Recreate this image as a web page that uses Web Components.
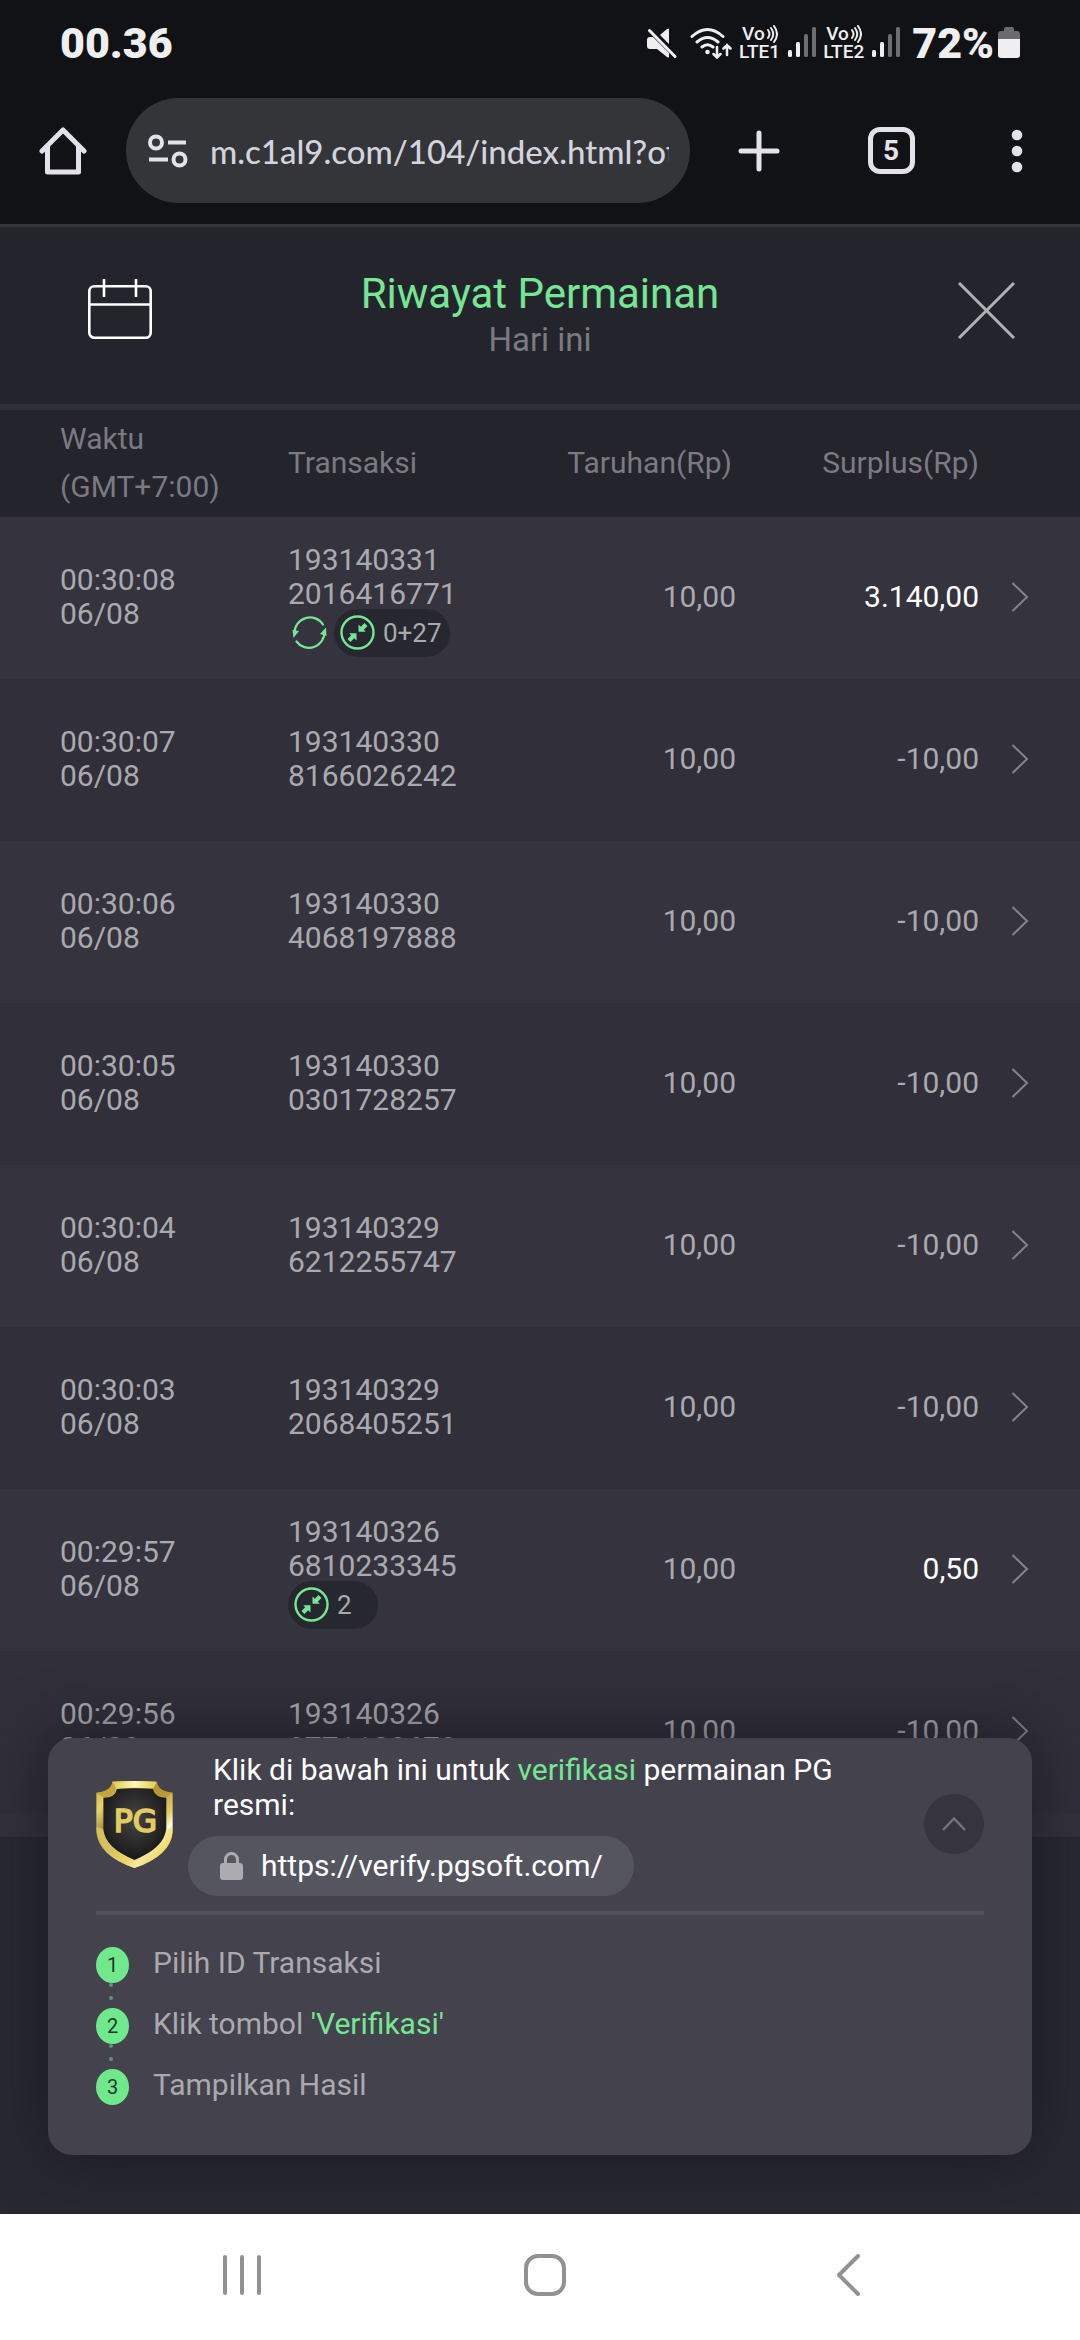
<!DOCTYPE html>
<html lang="id">
<head>
<meta charset="utf-8">
<meta name="viewport" content="width=device-width, initial-scale=1">
<title>Riwayat Permainan</title>
<style>
  html, body { margin: 0; }
  body {
    --bg: #282831;
    --bar: #24242d;
    --row: #302f3a;
    --row-alt: #35343e;
    --panel: #43424d;
    --text: #aaaaae;
    --muted: #7b7a80;
    --green: #76e694;
    --chrome: #111216;
    --chrome-fg: #e3e1e9;
    min-height: 100vh;
    display: flex;
    flex-direction: column;
    background: var(--bg);
    color: var(--text);
    font-family: Roboto, "Noto Sans", sans-serif;
    font-size: 30px;
    line-height: 34px;
  }
  main { flex: 1; position: relative; overflow: hidden; }
</style>
</head>
<body>
<status-bar time="00.36" battery="72%"></status-bar>
<browser-toolbar url="m.c1al9.com/104/index.html?ot" tabs="5"></browser-toolbar>
<page-header>
  <span slot="title">Riwayat Permainan</span>
  <span slot="subtitle">Hari ini</span>
</page-header>
<main>
  <bet-history></bet-history>
  <verify-panel>
    <span slot="intro">Klik di bawah ini untuk <span style="color:var(--green)">verifikasi</span> permainan PG resmi:</span>
    <verify-step number="1">Pilih ID Transaksi</verify-step>
    <verify-step number="2">Klik tombol <span style="color:var(--green)">'Verifikasi'</span></verify-step>
    <verify-step number="3" last>Tampilkan Hasil</verify-step>
  </verify-panel>
</main>
<system-nav></system-nav>

<script>
const RESET = `
  :host, *, *::before, *::after { box-sizing: border-box; }
  button { appearance: none; border: 0; margin: 0; padding: 0; background: none; color: inherit; font: inherit;
    display: flex; align-items: center; justify-content: center; }
  svg { display: block; flex: none; }
`;

function define(name, render) {
  customElements.define(name, class extends HTMLElement {
    constructor() {
      super();
      this.attachShadow({ mode: 'open' });
    }
    connectedCallback() {
      this.shadowRoot.innerHTML = render(this);
    }
  });
}

define('network-signal', el => `
  <style>${RESET}
    :host { display: flex; align-items: center; gap: 8px; }
    .label { display: grid; font-size: 19px; line-height: 18px; font-weight: 500; }
    .vo { display: flex; align-items: center; padding-left: 3px; gap: 1px; }
  </style>
  <div class="label">
    <span class="vo">Vo<svg width="12" height="18" viewBox="0 0 12 18" fill="none" stroke="currentColor" stroke-width="2" stroke-linecap="round"><path d="M2 5q3 4 0 8M5 3q4.500 6 0 12M8 1q6 8 0 16"/></svg></span>
    <span>LTE${el.getAttribute('sim')}</span>
  </div>
  <svg width="28" height="31" viewBox="0 0 28 31" fill="currentColor">
    <rect x="0" y="23" width="4" height="7" rx="1.500"/><rect x="8" y="15" width="4" height="15" rx="1.500"/>
    <rect x="16" y="7" width="4" height="23" rx="1.500" opacity=".42"/><rect x="24" y="0" width="4" height="30" rx="1.500" opacity=".42"/>
  </svg>`);

define('status-bar', el => `
  <style>${RESET}
    :host { display: flex; align-items: center; justify-content: space-between; height: 85px; padding: 0 60px;
      background: var(--chrome); color: #efefef; }
    .strong { font-size: 43px; line-height: 48px; font-weight: 900; }
    .icons { display: flex; align-items: center; gap: 7px; }
    .sound { margin-right: 6px; }
    .level { display: flex; align-items: center; gap: 4px; padding-left: 5px; }
  </style>
  <time class="strong">${el.getAttribute('time')}</time>
  <div class="icons">
    <svg class="sound" width="30" height="30" viewBox="0 0 30 30" fill="currentColor">
      <path d="M22 1v15L13 7l7-6q2-1 2 0zM0 12q0-3 3-3h3l16 16v4q0 1-2 0l-10-8H3q-3 0-3-3z"/>
      <path d="M2.500 2.500L28 28.500" stroke="currentColor" stroke-width="3" stroke-linecap="round"/>
    </svg>
    <svg width="42" height="32" viewBox="0 0 42 32" fill="none" stroke="currentColor" stroke-width="3" stroke-linecap="round">
      <path d="M2 9.500q15.500-14 31 0M7 15q10.500-9 21 0M12 20q5.500-4.500 11 0"/>
      <circle cx="17.500" cy="25" r="2.300" fill="currentColor" stroke="none"/>
      <path d="M27 20v10M23.500 27l3.500 3.500L30.500 27M37 28V18M33.500 21.500L37 18l3.500 3.500" stroke-width="2.500"/>
    </svg>
    <network-signal sim="1"></network-signal>
    <network-signal sim="2"></network-signal>
    <span class="level"><span class="strong">${el.getAttribute('battery')}</span>
      <svg width="22" height="32" viewBox="0 0 22 32">
        <path d="M6 2q0-2 2-2h6q2 0 2 2v2h3q3 0 3 3v6H0V7q0-3 3-3h3z" fill="#6b6b6e"/>
        <path d="M0 12h22v16q0 3-3 3H3q-3 0-3-3z" fill="currentColor"/>
      </svg>
    </span>
  </div>`);

define('browser-toolbar', el => `
  <style>${RESET}
    :host { display: flex; align-items: center; padding: 13px 0 21px; background: var(--chrome); color: var(--chrome-fg); }
    .side { width: 126px; height: 105px; }
    .plus { width: 138px; height: 105px; }
    form { flex: 1; min-width: 0; height: 105px; display: flex; align-items: center; gap: 22px; padding: 0 21px 0 22px;
      border-radius: 53px; background: #343539; }
    input { appearance: none; flex: 1; min-width: 0; border: 0; padding: 0; margin: 0; outline: 0; background: none;
      height: 48px; color: #d3d3dd; font: 500 33px/48px Lato, "Noto Sans", sans-serif; }
    .tabs span { display: flex; align-items: center; justify-content: center; width: 47px; height: 47px;
      border: 5px solid currentColor; border-radius: 12px; font-size: 28px; line-height: 28px; font-weight: 700; }
  </style>
  <button class="side" aria-label="Beranda"><svg width="48" height="48" viewBox="0 0 48 48" fill="none" stroke="currentColor" stroke-width="5" stroke-linecap="round" stroke-linejoin="round"><path d="M3 24L24 3l21 21M8.500 20v25h31V20"/></svg></button>
  <form>
    <button type="button" aria-label="Info situs"><svg width="40" height="34" viewBox="0 0 40 34" fill="none" stroke="currentColor" stroke-width="4"><circle cx="8" cy="8.500" r="6"/><path d="M20 8.500h18M1 25.500h19"/><circle cx="31.500" cy="25.500" r="6"/></svg></button>
    <input type="text" aria-label="Alamat" value="${el.getAttribute('url')}">
  </form>
  <button class="plus" aria-label="Tab baru"><svg width="42" height="42" viewBox="0 0 42 42" stroke="currentColor" stroke-width="5" stroke-linecap="round"><path d="M21 3v36M3 21h36"/></svg></button>
  <button class="side tabs" aria-label="Tab"><span>${el.getAttribute('tabs')}</span></button>
  <button class="side" aria-label="Menu"><svg width="12" height="44" viewBox="0 0 12 44" fill="currentColor"><circle cx="6" cy="6" r="5.300"/><circle cx="6" cy="22" r="5.300"/><circle cx="6" cy="38" r="5.300"/></svg></button>`);

define('page-header', () => `
  <style>${RESET}
    :host { display: grid; grid-template-columns: 1fr auto 1fr; align-items: start; padding: 43px 65px 0 88px;
      height: 186px; background: var(--bar); border-top: 3px solid #343539; border-bottom: 6px solid #2f2e39; }
    .calendar { justify-self: start; margin-top: 9px; color: #fff; }
    .close { justify-self: end; margin-top: 12px; color: #b1b0b5; }
    header { text-align: center; padding-right: 24px; margin-left: 1px; }
    h1 { margin: 0; font-size: 42px; line-height: 48px; font-weight: 400; color: var(--green); }
    p { margin: 0; font-size: 33px; line-height: 44px; color: var(--muted); }
  </style>
  <button class="calendar" aria-label="Pilih tanggal"><svg width="64" height="60" viewBox="0 0 64 60" fill="none" stroke="currentColor" stroke-width="2.600"><rect x="1.300" y="7.300" width="61.400" height="51.400" rx="5"/><path d="M1.300 25.500h61.400M16 0v18M48 0v18"/></svg></button>
  <header><h1><slot name="title"></slot></h1><p><slot name="subtitle"></slot></p></header>
  <button class="close" aria-label="Tutup"><svg width="57" height="57" viewBox="0 0 57 57" stroke="currentColor" stroke-width="3"><path d="M1 1l55 55M56 1L1 56"/></svg></button>`);

define('free-spin-icon', () => `
  <style>${RESET} :host { display: block; color: var(--green); margin: 0 7px 0 4px; }</style>
  <svg width="35" height="35" viewBox="0 0 35 35" fill="none" stroke="currentColor" stroke-width="2.200" stroke-linecap="round">
    <path d="M2.500 18A15.500 15.500 0 0 1 31 9.500M4.500 26.500A15.500 15.500 0 0 0 32.500 17"/>
    <path d="M0.500 15l1 8 5.500-7zM34.500 21l-.5-8.500-6 6.500z" fill="currentColor" stroke="none"/>
  </svg>`);

define('cascade-badge', () => `
  <style>${RESET}
    :host { display: inline-flex; align-items: center; gap: 8px; min-width: 90px; height: 48px; padding: 0 8px 0 6px;
      border-radius: 24px; background: #272730; font-size: 26px; line-height: 34px; }
    svg { color: var(--green); }
  </style>
  <svg width="35" height="35" viewBox="0 0 35 35" fill="currentColor">
    <circle cx="17.500" cy="17.500" r="16" fill="none" stroke="currentColor" stroke-width="2.400"/>
    <path d="M18.500 9.500l2.300 2.200 3.700-3.700 3 3-3.700 3.700 2 2h-7.300zM16.500 25.500l-2.300-2.200-3.700 3.700-3-3 3.700-3.700-2-2h7.300z"/>
  </svg><slot></slot>`);

const BETS = [
  { time: '00:30:08', id: ['193140331', '2016416771'], win: '3.140,00', spins: true, cascade: '0+27' },
  { time: '00:30:07', id: ['193140330', '8166026242'] },
  { time: '00:30:06', id: ['193140330', '4068197888'] },
  { time: '00:30:05', id: ['193140330', '0301728257'] },
  { time: '00:30:04', id: ['193140329', '6212255747'] },
  { time: '00:30:03', id: ['193140329', '2068405251'] },
  { time: '00:29:57', id: ['193140326', '6810233345'], win: '0,50', cascade: '2' },
  { time: '00:29:56', id: ['193140326', '8771108678'] },
];

const betRow = b => `
  <tr>
    <td class="time">${b.time}<br>06/08</td>
    <td class="${b.cascade ? 'tx featured' : 'tx'}">${b.id.join('<br>')}${b.cascade ? `<div class="badges">${b.spins ? '<free-spin-icon></free-spin-icon>' : ''}<cascade-badge>${b.cascade}</cascade-badge></div>` : ''}</td>
    <td class="num">10,00</td>
    <td class="num${b.win ? ' win' : ''}">${b.win || '-10,00'}</td>
    <td class="go"><button aria-label="Detail ${b.time}"><svg width="18" height="30" viewBox="0 0 18 30" fill="none" stroke="currentColor" stroke-width="2"><path d="M1.500 1l14.500 14-14.500 14"/></svg></button></td>
  </tr>`;

define('bet-history', () => `
  <style>${RESET}
    :host { display: block; border-bottom: 24px solid #33323c; }
    table { width: 100%; table-layout: fixed; border-collapse: collapse; }
    col.c-time { width: 288px; } col.c-bet { width: 216px; } col.c-win { width: 243px; } col.c-go { width: 101px; }
    th { height: 107px; padding: 0 0 2px; font-weight: 400; line-height: 48px; text-align: left;
      color: var(--muted); background: var(--bar); }
    td { height: 162px; padding: 0 0 2px; background: var(--row); }
    tr:nth-child(odd) td { background: var(--row-alt); }
    .time { padding-left: 60px; }
    .num { text-align: right; }
    th.bet { padding-right: 4px; }
    td.win { color: #fff; }
    td.featured { padding: 3px 0 0; }
    .badges { display: flex; align-items: center; margin-top: -2px; }
    .go { padding-left: 32px; color: #85848c; }
  </style>
  <table>
    <colgroup><col class="c-time"><col><col class="c-bet"><col class="c-win"><col class="c-go"></colgroup>
    <thead><tr><th class="time">Waktu<br>(GMT+7:00)</th><th>Transaksi</th><th class="num bet">Taruhan(Rp)</th><th class="num">Surplus(Rp)</th><th></th></tr></thead>
    <tbody>${BETS.map(betRow).join('')}</tbody>
  </table>`);

define('verify-step', el => `
  <style>${RESET}
    :host { display: flex; align-items: center; gap: 24px; height: 36px; }
    .mark { position: relative; display: flex; align-items: center; justify-content: center; width: 33px; height: 36px;
      border-radius: 50%; background: #6fe98c; color: #26362f; font-size: 20px; line-height: 24px; }
    .trail { position: absolute; left: 13px; top: 36px; color: #5f9277; }
    .label { padding-bottom: 4px; }
  </style>
  <span class="mark">${el.getAttribute('number')}${el.hasAttribute('last') ? '' : '<svg class="trail" width="4" height="17" viewBox="0 0 4 17" fill="currentColor"><circle cx="2" cy="2" r="2"/><circle cx="2" cy="15" r="2"/></svg>'}</span>
  <span class="label"><slot></slot></span>`);

define('pg-shield', () => `
  <style>${RESET} :host { display: block; }</style>
  <svg width="77" height="87" viewBox="78 62 230 260" role="img" aria-label="PG">
    <defs>
      <linearGradient id="gold" x1="0" y1="0" x2="1" y2="1">
        <stop offset="0" stop-color="#c9a93a"/><stop offset=".18" stop-color="#e8d36b"/><stop offset=".32" stop-color="#a98f45"/>
        <stop offset=".5" stop-color="#b89c4a"/><stop offset=".66" stop-color="#e6cd62"/><stop offset=".74" stop-color="#fffbe6"/><stop offset=".84" stop-color="#f0da68"/><stop offset="1" stop-color="#e8cc50"/>
      </linearGradient>
      <linearGradient id="rim" x1="0" y1="0" x2="1" y2="0">
        <stop offset="0" stop-color="#e2c94f"/><stop offset=".5" stop-color="#fff8b4"/><stop offset="1" stop-color="#e2c94f"/>
      </linearGradient>
      <radialGradient id="core" cx=".5" cy=".42" r=".55"><stop offset="0" stop-color="#454545"/><stop offset="1" stop-color="#1a1a1a"/></radialGradient>
    </defs>
    <path d="M127 64Q193 60 260 64Q262 92 307 97V215Q302 284 193 322Q84 284 79 215V97Q124 92 127 64Z" fill="url(#gold)"/>
    <path d="M127 64Q193 60 260 64L250 84Q193 80 138 84Z" fill="url(#rim)"/>
    <path d="M79 200L99 205Q106 262 193 298Q280 262 288 205L307 200Q307 284 193 322Q79 284 79 200Z" fill="#f2dc6e" opacity=".6"/>
    <path d="M138 84L127 64Q124 92 79 97L102 112Q136 112 138 84ZM250 84L260 64Q262 92 307 97L286 112Q252 112 250 84Z" fill="#b8962c" opacity=".7"/>
    <path d="M140 86Q193 82 248 86Q254 112 288 112V205Q282 262 193 298Q104 262 100 205V112Q136 112 140 86Z" fill="url(#core)"/>
    <text x="196" y="214" text-anchor="middle" font-family="DejaVu Sans, sans-serif" font-size="94" fill="#e3cb62" stroke="#e3cb62" stroke-width="5">PG</text>
  </svg>`);

define('verify-panel', () => `
  <style>${RESET}
    :host { position: absolute; left: 48px; right: 48px; bottom: 59px; display: block; padding: 14px 48px 50px;
      border-radius: 24px; background: var(--panel); box-shadow: 0 0 60px 4px rgba(20, 20, 26, .6); }
    .head { display: grid; grid-template-columns: auto 1fr auto; align-items: center; column-gap: 15px; }
    p { margin: 0 0 14px; padding-left: 25px; line-height: 35px; color: #fff; }
    a { display: inline-flex; align-items: center; gap: 18px; height: 60px; padding: 0 31px 0 32px; border-radius: 30px;
      background: #555560; color: #fff; text-decoration: none; vertical-align: top; }
    .toggle { width: 60px; height: 60px; border-radius: 50%; background: #35343f; color: #75747d; }
    hr { height: 4px; margin: 15px 0 32px; border: 0; background: #52515c; }
    .steps { display: grid; gap: 25px; }
  </style>
  <div class="head">
    <pg-shield></pg-shield>
    <div>
      <p><slot name="intro"></slot></p>
      <a href="https://verify.pgsoft.com/"><svg width="23" height="28" viewBox="0 0 23 28" fill="#acabb1"><rect y="11" width="23" height="17" rx="3"/><path d="M5.500 12V7.500a6 6 0 0 1 12 0V12" fill="none" stroke="#acabb1" stroke-width="3"/></svg>https://verify.pgsoft.com/</a>
    </div>
    <button class="toggle" aria-label="Ciutkan"><svg width="24" height="14" viewBox="0 0 24 14" fill="none" stroke="currentColor" stroke-width="2.400"><path d="M1 13L12 1.500 23 13"/></svg></button>
  </div>
  <hr>
  <div class="steps"><slot></slot></div>`);

define('system-nav', () => `
  <style>${RESET}
    :host { display: grid; grid-template-columns: repeat(3, 1fr); height: 126px; padding: 0 81px 4px 90px; background: #fff; color: #929292; }
  </style>
  <button aria-label="Terbaru"><svg width="38" height="42" viewBox="0 0 38 42" stroke="currentColor" stroke-width="4" stroke-linecap="round"><path d="M2 3v36M19 3v36M36 3v36"/></svg></button>
  <button aria-label="Layar utama"><svg width="42" height="42" viewBox="0 0 42 42" fill="none" stroke="currentColor" stroke-width="4"><rect x="2" y="2" width="38" height="38" rx="12"/></svg></button>
  <button aria-label="Kembali"><svg width="24" height="42" viewBox="0 0 24 42" fill="none" stroke="currentColor" stroke-width="4" stroke-linecap="round" stroke-linejoin="round"><path d="M22 2L3 21l19 19"/></svg></button>`);
</script>
</body>
</html>
